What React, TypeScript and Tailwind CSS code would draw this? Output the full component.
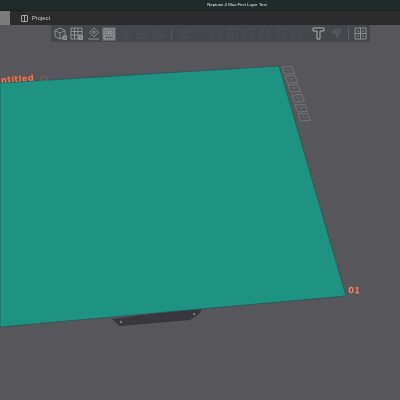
const fadedIcons = [
  { id: 'a', d: 'M2 3h3v8H2zM7 2l3 2v6l-3 2z' },
  { id: 'b', d: 'M2 3h8v8H2zM2 7h8' },
  { id: 'c', d: 'M2 3h9v8H2zM5 3v8M8 3v8' },
]

const fadedRight = [
  { id: 'd', d: 'M2 2h4v9H2zM8 3l3 1v6l-3 1z' },
  { id: 'e', d: 'M1 6l5-4 5 4-5 5z' },
  { id: 'f', d: 'M2 3h9v3l-2 5H3z' },
  { id: 'g', d: 'M2 2h9v9H2zM2 6h5v5' },
  { id: 'h', d: 'M2 2h9v7l-2 2H2zM6 2v4' },
  { id: 'i', d: 'M2 2h9l-1 9H3zM5 2v3h3' },
  { id: 'j', d: 'M3 2h8v9H5l-2-2z' },
  { id: 'k', d: 'M2 3h9v7H2zM4 3v7' },
]

const sideIcons = [
  { x: 282, y: 67 },
  { x: 285, y: 76 },
  { x: 288, y: 85 },
  { x: 292, y: 95 },
  { x: 295, y: 105 },
  { x: 298, y: 114 },
]

function Faded({ d }: { d: string }) {
  return (
    <svg width="13" height="13" viewBox="0 0 13 13" fill="none" stroke="#4d5055" strokeWidth="1">
      <path d={d} />
    </svg>
  )
}

export default function App() {
  return (
    <div className="flex h-[400px] w-[400px] flex-col overflow-hidden bg-[#57565b] font-['Liberation_Sans',sans-serif] blur-[0.35px]">
      <div className="flex h-[11px] items-center justify-center border-b border-[#1a1f1f] bg-[#1f2a2a] pl-[74px] text-[4.3px] text-[#e4e8e8]">
        Neptune 4 Max First Layer Test
      </div>

      <div className="flex h-[14px] items-center bg-[#2c2b2d]">
        <div className="h-full w-[10px] bg-[#7b7b7e]" />
        <div className="ml-[11px] flex items-center gap-[4px] text-[5.8px] text-[#d0d0d0]">
          <svg width="7" height="7" viewBox="0 0 7 7" fill="none" stroke="#c4c4c4" strokeWidth="0.8">
            <rect x="0.5" y="0.5" width="6" height="6" rx="0.5" />
            <path d="M3.5 0.5v6" />
          </svg>
          <span>Project</span>
        </div>
      </div>

      <div className="relative flex-1">
        <svg className="absolute inset-0" width="400" height="375" viewBox="0 0 400 375">
          <path d="M112 294l6 6 3 1 69-6 10-7 3-6z" fill="#38373b" />
          <circle cx="121" cy="297" r="1.2" fill="#77767a" />
          <circle cx="194" cy="289" r="1.2" fill="#77767a" />
          <path d="M0 58L279 41L346 271L0 302Z" fill="#1f9382" stroke="#2a5557" strokeWidth="0.8" />
          {sideIcons.map((s) => (
            <g key={s.y} transform={`translate(${s.x} ${s.y - 25}) skewX(18) rotate(-3)`}>
              <rect width="10" height="7" fill="none" stroke="#7d7d82" strokeWidth="0.7" />
              <path d="M3 2l2 2 3-2" fill="none" stroke="#7d7d82" strokeWidth="0.6" />
            </g>
          ))}
          <text x="1" y="58" transform="rotate(-4 0 58)" fill="#f0704e" fontSize="8.5" fontWeight="700" letterSpacing="0.2" fontFamily="'DejaVu Sans', sans-serif">
            ntitled
          </text>
          <rect x="41" y="52" width="6" height="4" fill="none" stroke="#6f6f74" strokeWidth="0.7" transform="rotate(-4 41 52)" />
          <text x="348" y="268" transform="rotate(3 348 268)" fill="#f0805e" fontSize="8.5" fontWeight="700" fontFamily="'DejaVu Sans', sans-serif">
            01
          </text>
        </svg>

        <div className="relative ml-[51px] flex h-[17px] w-[319px] items-center bg-[#44474c] pl-[3px]">
          <svg width="13" height="13" viewBox="0 0 13 13" fill="none" stroke="#a2a3a6" strokeWidth="0.8">
            <path d="M1 3.5L6 1l5 2.5v6L6 12l-5-2.5zM1 3.5l5 2.5 5-2.5M6 6v6" />
            <rect x="9" y="9" width="3.5" height="3.5" fill="#77787b" />
          </svg>
          <svg className="ml-[3px]" width="13" height="13" viewBox="0 0 13 13" fill="none" stroke="#a2a3a6" strokeWidth="0.8">
            <path d="M1 1h11v11H1zM1 4.5h11M1 8h11M4.5 1v11M8 1v11" />
            <rect x="9" y="9" width="3.5" height="3.5" fill="#77787b" />
          </svg>
          <svg className="ml-[4px]" width="13" height="13" viewBox="0 0 13 13" fill="none" stroke="#a2a3a6" strokeWidth="0.8">
            <path d="M7 0.8l4.5 4.5L7 9.8 2.5 5.3zM1 12h11" />
            <circle cx="7" cy="5.3" r="1.2" />
          </svg>
          <div className="ml-[2px] flex h-[14px] w-[14px] items-center justify-center bg-[#5f6166]">
            <svg width="12" height="12" viewBox="0 0 12 12" fill="none" stroke="#b3b4b7" strokeWidth="0.8">
              <path d="M1 1h10v10H1zM3 3h2.5v3H3zM7 3h2v3H7zM1 8h10" />
            </svg>
          </div>
          <div className="ml-[4px] flex gap-[3px]">
            {fadedIcons.map((i) => (
              <Faded key={i.id} d={i.d} />
            ))}
          </div>
          <div className="ml-[6px] h-[12px] w-px bg-[#55585d]" />
          <div className="ml-[6px] flex gap-[3px]">
            {fadedRight.map((i) => (
              <Faded key={i.id} d={i.d} />
            ))}
          </div>
          <svg className="ml-[9px]" width="13" height="13" viewBox="0 0 13 13" fill="#3f4247" stroke="#b0b1b4" strokeWidth="1">
            <path d="M1 1h11v3H8v8H5V4H1z" />
          </svg>
          <svg className="ml-[4px]" width="14" height="13" viewBox="0 0 14 13" fill="#53565b">
            <path d="M1 6l6-5 6 1-2 5-3 5-2-5z" />
          </svg>
          <div className="ml-[5px] h-[12px] w-px bg-[#5c5f64]" />
          <svg className="ml-[5px]" width="13" height="13" viewBox="0 0 13 13" fill="none" stroke="#a2a3a6" strokeWidth="0.8">
            <path d="M1 1h11v11H1zM6.5 1v11M1 6.5h11M3 3l2 2M10 3L8 5M3 10l2-2M8 8l2 2" />
          </svg>
        </div>
      </div>
    </div>
  )
}
